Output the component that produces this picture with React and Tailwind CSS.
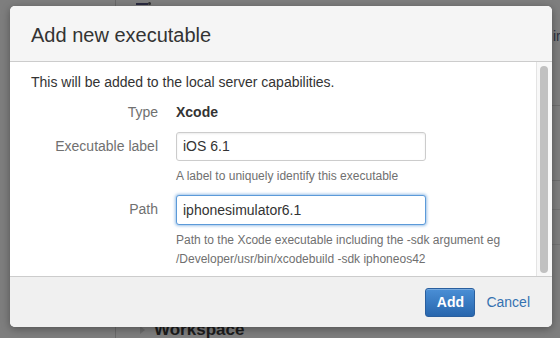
import React from 'react';

const font = { fontFamily: '"Liberation Sans", Arial, sans-serif' };

const FormRow = ({ label, children, className = '' }) => (
  <div className={`flex ${className}`}>
    <div className="w-[127px] shrink-0 text-right text-[14px] leading-[20px] text-[#707070] pt-[4px]">{label}</div>
    <div className="ml-[18px] flex-1">{children}</div>
  </div>
);

export default function App() {
  return (
    <div className="relative w-[560px] h-[338px] overflow-hidden bg-[#7e7e7e] pt-[6px] pl-[10px]" style={font}>
      {/* page behind the overlay */}
      <div className="absolute left-[115px] top-0 h-full w-px bg-[#6a6a6a]" />
      <div className="absolute left-[136px] top-[3px] h-[2px] w-[12px] bg-[#2a2a40]" />
      <div className="absolute left-[148px] top-[2px] h-[3px] w-[3px] rounded-full bg-[#333]" />
      <div className="absolute left-[140px] top-[326px] h-0 w-0 border-y-[4px] border-l-[5px] border-y-transparent border-l-[#6c6c6c]" />
      <div className="absolute left-[154px] top-[317px] text-[17px] font-bold text-[#1c1c1c]">Workspace</div>
      <div className="absolute left-[553px] top-[26px] text-[14px] text-[#2c3040]">ir</div>
      <div className="absolute left-[552px] top-[105px] h-px w-[8px] bg-[#6e6e6e]" />
      <div className="absolute left-[552px] top-[180px] h-px w-[8px] bg-[#6e6e6e]" />
      <div className="absolute left-[552px] top-[209px] h-px w-[8px] bg-[#727272]" />
      <div className="absolute left-[552px] top-[244px] h-px w-[8px] bg-[#727272]" />

      {/* dialog */}
      <div className="relative flex h-[321px] w-[542px] flex-col overflow-hidden rounded-[5px] bg-white shadow-[0_2px_8px_rgba(0,0,0,0.35)]">
        <div className="h-[56px] shrink-0 border-b border-[#cccccc] bg-[#f5f5f5] pl-[21px] pt-[17px]">
          <h1 className="text-[20px] leading-[24px] text-[#333]">Add new executable</h1>
        </div>

        <div className="flex min-h-0 flex-1">
          <div className="flex-1 pl-[21px] pt-[10px] text-[#333]">
            <p className="text-[14px] leading-[20px]">This will be added to the local server capabilities.</p>

            <div className="mt-[10px] flex">
              <div className="w-[127px] text-right text-[14px] leading-[20px] text-[#707070]">Type</div>
              <div className="ml-[18px] text-[14px] font-bold leading-[20px] text-[#333]">Xcode</div>
            </div>

            <FormRow label="Executable label" className="mt-[10px]">
              <div className="flex h-[29px] w-[250px] items-center rounded-[3px] border border-[#cccccc] bg-white pl-[6px] text-[14px] text-[#333] shadow-[inset_0_1px_2px_rgba(0,0,0,0.08)]">
                iOS 6.1
              </div>
              <div className="mt-[6px] text-[12px] leading-[18px] text-[#707070]">A label to uniquely identify this executable</div>
            </FormRow>

            <FormRow label="Path" className="mt-[10px]">
              <div className="flex h-[30px] w-[250px] items-center rounded-[3px] border border-[#5b9ad9] bg-white pl-[6px] text-[14px] text-[#333] shadow-[0_0_3px_1px_rgba(91,154,217,0.6)]">
                iphonesimulator6.1
              </div>
              <div className="mt-[6px] text-[12px] leading-[19px] text-[#707070]">
                <div>Path to the Xcode executable including the -sdk argument eg</div>
                <div>/Developer/usr/bin/xcodebuild -sdk iphoneos42</div>
              </div>
            </FormRow>
          </div>

          <div className="w-[16px] shrink-0 border-l border-[#e4e4e4] bg-[#f8f8f8] pl-[3px] pt-[4px] pb-[3px]">
            <div className="h-full w-[8px] rounded-full bg-[#c1c1c1]" />
          </div>
        </div>

        <div className="flex h-[51px] shrink-0 items-center justify-end border-t border-[#cccccc] bg-[#f0f0f0] pr-[22px]">
          <button className="h-[29px] w-[50px] rounded-[3px] border border-[#2a5f9e] bg-gradient-to-b from-[#4a8fd6] to-[#2866ad] text-[14px] font-bold text-white shadow-[inset_0_1px_0_rgba(255,255,255,0.25)]">
            Add
          </button>
          <span className="ml-[11px] text-[14px] text-[#3572b0]">Cancel</span>
        </div>
      </div>
    </div>
  );
}
